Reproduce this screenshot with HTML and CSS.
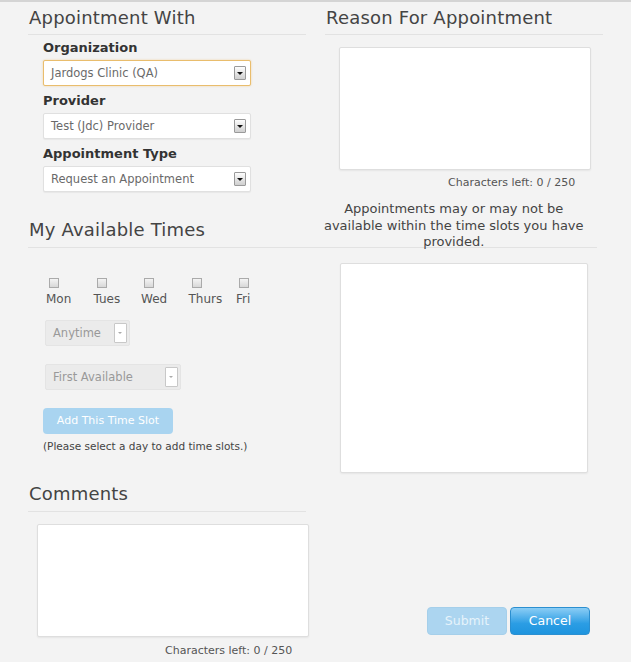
FILE: index.html
```html
<!DOCTYPE html>
<html lang="en">
<head>
    <meta charset="UTF-8">
    <meta name="viewport" content="width=device-width, initial-scale=1.0">
    <title>Request Appointment</title>
    <link rel="stylesheet" href="styles.css">
</head>
<body>
    <div class="page">
        <div class="row top-row">
            <section class="col">
                <h2>Appointment With</h2>
                <div class="fields">
                    <label>Organization</label>
                    <div class="select focus"><span>Jardogs Clinic (QA)</span><i class="arrow"></i></div>
                    <label>Provider</label>
                    <div class="select"><span>Test (Jdc) Provider</span><i class="arrow"></i></div>
                    <label>Appointment Type</label>
                    <div class="select"><span>Request an Appointment</span><i class="arrow"></i></div>
                </div>
            </section>
            <section class="col">
                <h2>Reason For Appointment</h2>
                <div class="textbox reason-box"></div>
                <p class="chars reason-chars">Characters left: 0 / 250</p>
            </section>
        </div>

        <div class="row mid-row">
            <h2 class="times-title">My Available Times</h2>
            <p class="notice">Appointments may or may not be available within the time slots you have provided.</p>
        </div>

        <div class="row bottom-row">
            <section class="col">
                <div class="days">
                    <div class="day"><span class="check"></span>Mon</div>
                    <div class="day"><span class="check"></span>Tues</div>
                    <div class="day"><span class="check"></span>Wed</div>
                    <div class="day"><span class="check"></span>Thurs</div>
                    <div class="day"><span class="check"></span>Fri</div>
                </div>
                <div class="select disabled anytime"><span>Anytime</span><i class="arrow"></i></div>
                <div class="select disabled first"><span>First Available</span><i class="arrow"></i></div>
                <button class="btn add-btn" disabled>Add This Time Slot</button>
                <p class="hint">(Please select a day to add time slots.)</p>

                <h2 class="comments-title">Comments</h2>
                <div class="textbox comments-box"></div>
                <p class="chars comments-chars">Characters left: 0 / 250</p>
            </section>
            <section class="col right-bottom">
                <div class="textbox slots-box"></div>
                <div class="actions">
                    <button class="btn submit-btn" disabled>Submit</button>
                    <button class="btn cancel-btn">Cancel</button>
                </div>
            </section>
        </div>
    </div>
</body>
</html>
```

FILE: styles.css
```css
body {
    margin: 0;
    padding: 0;
    background-color: #f3f3f3;
    border-top: 2px solid #d4d4d4;
    font-family: "DejaVu Sans", Verdana, sans-serif;
    color: #444;
}

.page {
    padding-left: 28px;
    width: 575px;
}

.row {
    display: flex;
}

.col {
    width: 278px;
}

.top-row .col + .col {
    margin-left: 19px;
}

h2 {
    margin: 0;
    font-size: 18px;
    font-weight: normal;
    color: #444;
    letter-spacing: 0.2px;
    padding: 5px 0 6px 1px;
    border-bottom: 1px solid #e2e2e2;
}

.fields {
    padding-left: 15px;
    padding-top: 5px;
}

label {
    display: block;
    font-size: 13px;
    font-weight: bold;
    color: #333;
    margin: 0 0 5px;
}

.select {
    display: flex;
    align-items: center;
    justify-content: space-between;
    box-sizing: border-box;
    width: 208px;
    height: 26px;
    padding: 0 4px 0 7px;
    background-color: #fff;
    border: 1px solid #e0e0e0;
    border-radius: 2px;
    box-shadow: 0 1px 1px rgba(0, 0, 0, 0.05);
    font-size: 11.5px;
    color: #6a6a6a;
    margin-bottom: 7px;
}

.select.focus {
    border-color: #e9bd6d;
    box-shadow: 0 0 2px rgba(233, 180, 90, 0.6);
}

.arrow {
    position: relative;
    display: block;
    width: 12px;
    height: 14px;
    box-sizing: border-box;
    border: 1px solid #9a9a9a;
    border-radius: 1px;
    background: linear-gradient(#fdfdfd, #cfcfcf);
}

.arrow::after {
    content: "";
    position: absolute;
    left: 2px;
    top: 5px;
    border-left: 3px solid transparent;
    border-right: 3px solid transparent;
    border-top: 3px solid #111;
}

.textbox {
    background-color: #fff;
    border: 1px solid #dedede;
    border-radius: 2px;
    box-shadow: 0 1px 2px rgba(0, 0, 0, 0.06);
}

.reason-box {
    width: 250px;
    height: 121px;
    margin: 12px 0 0 14px;
}

.chars {
    margin: 0;
    font-size: 11px;
    color: #555;
}

.reason-chars {
    padding: 6px 0 0 123px;
}

.mid-row {
    align-items: flex-end;
    border-bottom: 1px solid #e2e2e2;
    width: 569px;
    margin-top: 2px;
}

.times-title {
    width: 282px;
    border-bottom: none;
    padding-bottom: 7px;
}

.notice {
    box-sizing: border-box;
    width: 287px;
    padding: 0 4px;
    margin: 0 0 -4px;
    text-align: center;
    font-size: 13px;
    line-height: 16.5px;
    color: #444;
}

.bottom-row .col + .col {
    margin-left: 34px;
}

.days {
    display: flex;
    padding: 30px 0 0 18px;
    margin-bottom: 14px;
}

.day {
    display: flex;
    flex-direction: column;
    align-items: flex-start;
    width: 47.5px;
    font-size: 12px;
    color: #555;
}

.check {
    display: block;
    box-sizing: border-box;
    width: 10px;
    height: 10px;
    border: 1px solid #aaa;
    background: linear-gradient(#f4f4f4, #d8d8d8);
    margin: 0 0 4px 3px;
}

.select.disabled {
    background-color: #ebebeb;
    border-color: #e4e4e4;
    box-shadow: none;
    color: #999;
    font-size: 11.5px;
    margin-left: 17px;
    height: 26px;
    margin-bottom: 18px;
    padding-right: 2px;
}

.select.disabled .arrow {
    border-color: #c8c8c8;
    background: #fff;
    height: 20px;
    width: 13px;
}

.select.disabled .arrow::after {
    top: 8px;
    left: 3px;
    border-left-width: 2.5px;
    border-right-width: 2.5px;
    border-top-width: 2.5px;
    border-top-color: #aaa;
}

.anytime {
    width: 85px;
}

.first {
    width: 136px;
}

.btn {
    font-family: "DejaVu Sans", Verdana, sans-serif;
    border-radius: 4px;
    color: #fff;
    cursor: pointer;
}

.add-btn {
    margin-left: 15px;
    width: 130px;
    height: 26px;
    border: none;
    background-color: #a9d4f0;
    font-size: 11px;
    padding: 0;
}

.hint {
    margin: 6px 0 0 15px;
    font-size: 10.5px;
    color: #444;
}

.comments-title {
    margin-top: 26px;
    padding-bottom: 7px;
}

.comments-box {
    width: 270px;
    height: 111px;
    margin: 12px 0 0 9px;
}

.comments-chars {
    padding: 7px 0 0 137px;
}

.right-bottom {
    padding-top: 15px;
    width: 250px;
}

.slots-box {
    width: 246px;
    height: 208px;
}

.actions {
    display: flex;
    justify-content: flex-end;
    gap: 3px;
    margin-top: 134px;
}

.submit-btn,
.cancel-btn {
    width: 80px;
    height: 28px;
    font-size: 12.5px;
    padding: 0;
}

.submit-btn {
    border: 1px solid #a5cfea;
    background-color: #acd5f0;
    color: #e6f3fb;
}

.cancel-btn {
    border: 1px solid #2b8fd0;
    background: linear-gradient(#8bcdf5, #2b9de4 60%, #1e94de);
}
```
